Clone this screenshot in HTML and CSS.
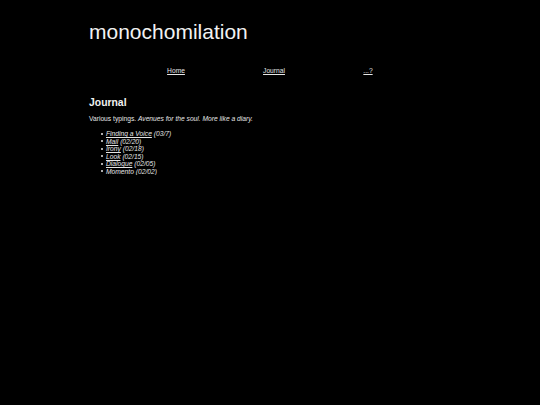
FILE: index.html
```html
<!DOCTYPE html>
<html>
<head>
<meta charset="utf-8">
<title>monochomilation</title>
<link rel="stylesheet" href="styles.css">
</head>
<body>
<div class="page">
  <h1 class="title">monochomilation</h1>
  <nav class="nav">
    <div class="nav-cell nav-home"><a href="#">Home</a></div>
    <div class="nav-cell nav-journal"><a href="#">Journal</a></div>
    <div class="nav-cell nav-more"><a href="#">...?</a></div>
  </nav>
  <h2 class="heading">Journal</h2>
  <p class="intro">Various typings. <em>Avenues for the soul. More like a diary.</em></p>
  <ul class="entries">
    <li><a href="#"><em>Finding a Voice</em></a> <em>(03/7)</em></li>
    <li><a href="#"><em>Mail</em></a> <em>(02/20)</em></li>
    <li><a href="#"><em>Irony</em></a> <em>(02/18)</em></li>
    <li><a href="#"><em>Look</em></a> <em>(02/15)</em></li>
    <li><a href="#"><em>Dialogue</em></a> <em>(02/05)</em></li>
    <li><a href="#"><em>Momento</em></a> <em>(02/02)</em></li>
  </ul>
</div>
</body>
</html>
```

FILE: styles.css
```css
html, body {
  background: #000;
}
body {
  margin: 0;
  color: #e6e6e6;
  font-family: "Liberation Sans", Arial, sans-serif;
  font-size: 6.7px;
}
a {
  color: #e6e6e6;
}
.page {
  width: 362px;
  margin: 0 auto;
  padding-top: 20px;
}
.title {
  margin: 0;
  font-size: 21px;
  font-weight: normal;
  color: #f2f2f2;
}
.nav {
  display: flex;
  margin: 23px 0 0 38.5px;
}
.nav-cell {
  text-align: center;
}
.nav-home {
  width: 97px;
}
.nav-journal {
  width: 99px;
}
.nav-more {
  width: 89px;
}
.heading {
  margin: 23px 0 0;
  font-size: 10.4px;
  font-weight: bold;
  color: #f2f2f2;
}
.intro {
  margin: 7px 0 0;
}
.entries {
  margin: 8px 0 0;
  padding-left: 17px;
  list-style: none;
}
.entries li {
  line-height: 7.5px;
}
.entries li::before {
  content: "";
  display: inline-block;
  width: 2px;
  height: 2px;
  margin-left: -5px;
  margin-right: 3px;
  border-radius: 50%;
  background: #e6e6e6;
  vertical-align: 1.5px;
}
```
